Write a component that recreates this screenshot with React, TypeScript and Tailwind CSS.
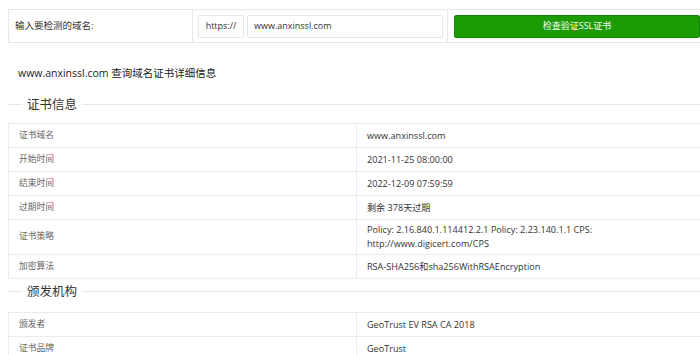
const certRows: { label: string; value: React.ReactNode; tall?: boolean }[] = [
  { label: '证书域名', value: 'www.anxinssl.com' },
  { label: '开始时间', value: '2021-11-25 08:00:00' },
  { label: '结束时间', value: '2022-12-09 07:59:59' },
  { label: '过期时间', value: '剩余 378天过期' },
  {
    label: '证书策略',
    value: (
      <>
        Policy: 2.16.840.1.114412.2.1 Policy: 2.23.140.1.1 CPS:
        <br />
        http://www.digicert.com/CPS
      </>
    ),
    tall: true,
  },
  { label: '加密算法', value: 'RSA-SHA256和sha256WithRSAEncryption' },
];

const issuerRows = [
  { label: '颁发者', value: 'GeoTrust EV RSA CA 2018' },
  { label: '证书品牌', value: 'GeoTrust' },
];

function Legend({ title }: { title: string }) {
  return (
    <div className="flex items-center h-[17px]">
      <div className="w-[14px] h-px bg-[#e8e8e8]" />
      <span className="px-[5px] text-[12.5px] leading-[17px] text-[#333]">{title}</span>
      <div className="flex-1 h-px bg-[#e8e8e8]" />
    </div>
  );
}

function InfoTable({ rows }: { rows: { label: string; value: React.ReactNode; tall?: boolean }[] }) {
  return (
    <div className="border-t border-l border-[#ebebeb]">
      {rows.map((row) => (
        <div
          key={row.label}
          className={`flex border-b border-[#ebebeb] ${row.tall ? 'h-[35px]' : 'h-[24px]'}`}
        >
          <div className="w-[348px] shrink-0 border-r border-[#ebebeb] flex items-center pl-[10px] text-[8.75px] text-[#666]">
            {row.label}
          </div>
          <div className="flex-1 flex items-center pl-[10px] text-[9.1px] leading-[14px] text-[#333]">
            <div>{row.value}</div>
          </div>
        </div>
      ))}
    </div>
  );
}

export default function App() {
  return (
    <div className="w-[700px] h-[355px] overflow-hidden bg-white font-['Open_Sans','Noto_Sans_CJK_SC',sans-serif]">
      <div className="ml-2 w-[700px] pt-[9px]">
        <div className="flex h-[34px] border border-[#e8e8e8]">
          <div className="w-[184px] shrink-0 border-r border-[#e8e8e8] flex items-center pl-[6px] text-[9.5px] text-[#333]">
            输入要检测的域名:
          </div>
          <div className="w-[255px] shrink-0 border-r border-[#e8e8e8] flex items-center gap-[3px] pl-[5px]">
            <div className="w-[46px] h-[23px] border border-[#e8e8e8] rounded-[2px] flex items-center justify-center text-[9px] text-[#333]">
              https://
            </div>
            <div className="w-[196px] h-[23px] border border-[#e8e8e8] rounded-[2px] flex items-center pl-[6px] text-[9px] text-[#333]">
              www.anxinssl.com
            </div>
          </div>
          <div className="flex-1 flex items-center pl-[6px]">
            <button className="w-[246px] h-[23px] bg-[#1c9c02] border border-[#14860a] rounded-[2px] text-white text-[9px] flex items-center justify-center">
              检查验证SSL证书
            </button>
          </div>
        </div>

        <div className="mt-[23px] pl-[10px] text-[10.5px] leading-[14px] text-[#222]">
          www.anxinssl.com 查询域名证书详细信息
        </div>

        <div className="mt-[16px]">
          <Legend title="证书信息" />
        </div>
        <div className="mt-[10px]">
          <InfoTable rows={certRows} />
        </div>

        <div className="mt-[4px]">
          <Legend title="颁发机构" />
        </div>
        <div className="mt-[12px]">
          <InfoTable rows={issuerRows} />
        </div>
      </div>
    </div>
  );
}
